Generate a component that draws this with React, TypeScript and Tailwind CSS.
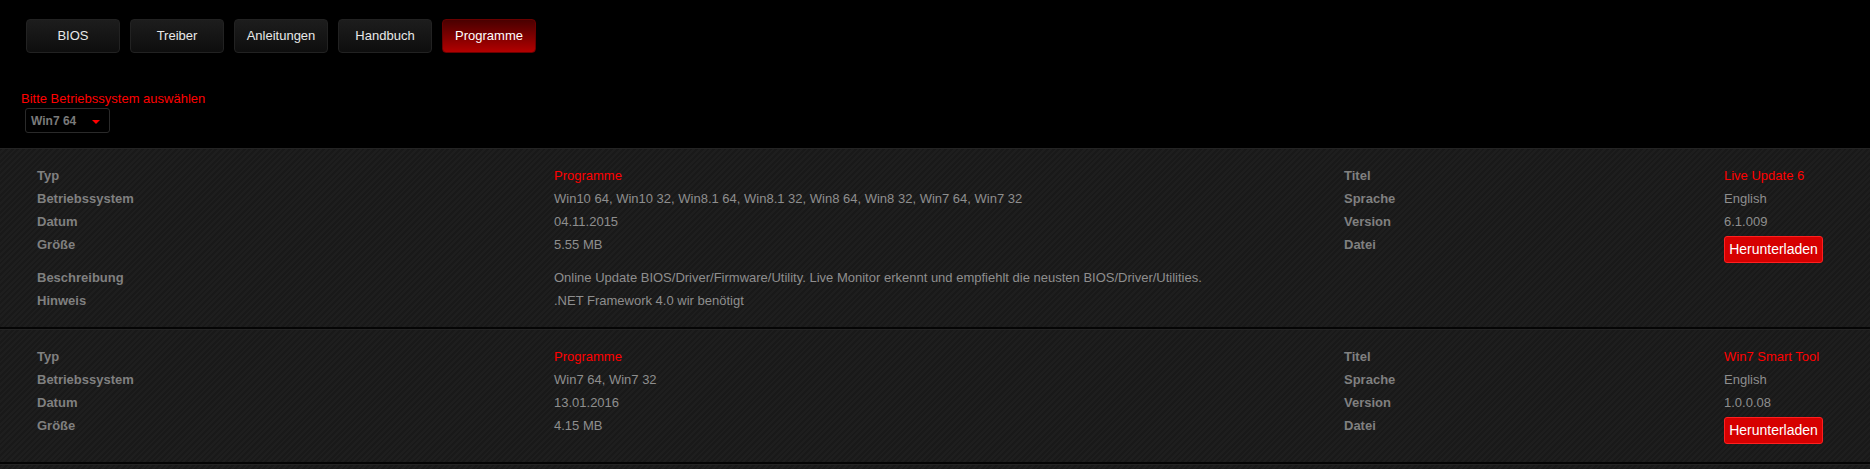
import React from "react";

const tabs = ["BIOS", "Treiber", "Anleitungen", "Handbuch", "Programme"];

type Entry = {
  typ: string;
  os: string;
  datum: string;
  groesse: string;
  titel: string;
  sprache: string;
  version: string;
  beschreibung?: string;
  hinweis?: string;
};

const entries: Entry[] = [
  {
    typ: "Programme",
    os: "Win10 64, Win10 32, Win8.1 64, Win8.1 32, Win8 64, Win8 32, Win7 64, Win7 32",
    datum: "04.11.2015",
    groesse: "5.55 MB",
    titel: "Live Update 6",
    sprache: "English",
    version: "6.1.009",
    beschreibung:
      "Online Update BIOS/Driver/Firmware/Utility. Live Monitor erkennt und empfiehlt die neusten BIOS/Driver/Utilities.",
    hinweis: ".NET Framework 4.0 wir benötigt",
  },
  {
    typ: "Programme",
    os: "Win7 64, Win7 32",
    datum: "13.01.2016",
    groesse: "4.15 MB",
    titel: "Win7 Smart Tool",
    sprache: "English",
    version: "1.0.0.08",
  },
];

const panelBg =
  "bg-[repeating-linear-gradient(135deg,#191919_0px,#191919_2px,#1e1e1e_2px,#1e1e1e_4px)]";

const Label = ({ children }: { children: React.ReactNode }) => (
  <div className="py-[3px] leading-[17px] font-bold text-[#808080]">{children}</div>
);

const Value = ({ children, red, span }: { children: React.ReactNode; red?: boolean; span?: boolean }) => (
  <div
    className={`py-[3px] leading-[17px] ${red ? "text-[#f00]" : "text-[#8e8e8e]"} ${span ? "col-span-3" : ""}`}
  >
    {children}
  </div>
);

const EntryPanel = ({ e }: { e: Entry }) => (
  <div className={`${panelBg} border-t border-t-[#242424] border-b-2 border-b-[#050505] pt-[15px] pb-[15px] pl-[37px]`}>
    <div className="grid grid-cols-[517px_790px_380px_1fr] text-[13px]">
      <Label>Typ</Label>
      <Value red>{e.typ}</Value>
      <Label>Titel</Label>
      <Value red>{e.titel}</Value>

      <Label>Betriebssystem</Label>
      <Value>{e.os}</Value>
      <Label>Sprache</Label>
      <Value>{e.sprache}</Value>

      <Label>Datum</Label>
      <Value>{e.datum}</Value>
      <Label>Version</Label>
      <Value>{e.version}</Value>

      <Label>Größe</Label>
      <Value>{e.groesse}</Value>
      <Label>Datei</Label>
      <div className="py-[3px]">
        <button className="h-[27px] w-[99px] rounded-[3px] border border-[#ff2020] bg-[#d60000] text-[14px] leading-[25px] text-white">
          Herunterladen
        </button>
      </div>

      {e.beschreibung && (
        <>
          <Label>Beschreibung</Label>
          <Value span>{e.beschreibung}</Value>
        </>
      )}
      {e.hinweis && (
        <>
          <Label>Hinweis</Label>
          <Value span>{e.hinweis}</Value>
        </>
      )}
    </div>
  </div>
);

export default function App() {
  return (
    <div className="min-h-screen bg-black font-['Liberation_Sans',Arial,sans-serif]">
      <div className="flex gap-[10px] pl-[26px] pt-[19px]">
        {tabs.map((t) => {
          const active = t === "Programme";
          return (
            <button
              key={t}
              className={`h-[34px] w-[94px] rounded-[4px] border text-[13px] ${
                active
                  ? "border-[#6a0000] bg-linear-to-b from-[#4a0000] to-[#b30000] text-white"
                  : "border-[#222] bg-linear-to-b from-[#1d1d1d] to-[#0e0e0e] text-[#e8e8e8]"
              }`}
            >
              {t}
            </button>
          );
        })}
      </div>

      <div className="mt-[38px] pl-[21px] text-[13px] leading-[15px] text-[#f00]">
        Bitte Betriebssystem auswählen
      </div>
      <div className="ml-[25px] mt-[2px] flex h-[25px] w-[85px] items-center justify-between rounded-[3px] border border-[#2a2a2a] bg-black pl-[5px] pr-[9px]">
        <span className="text-[12px] font-bold text-[#7a7a7a]">Win7 64</span>
        <span className="mt-[2px] h-0 w-0 border-l-[4px] border-r-[4px] border-t-[4px] border-l-transparent border-r-transparent border-t-[#f00]" />
      </div>

      <div className="mt-[15px]">
        {entries.map((e) => (
          <EntryPanel key={e.titel} e={e} />
        ))}
        <div className={`${panelBg} h-[60px] border-t border-t-[#242424]`} />
      </div>
    </div>
  );
}
